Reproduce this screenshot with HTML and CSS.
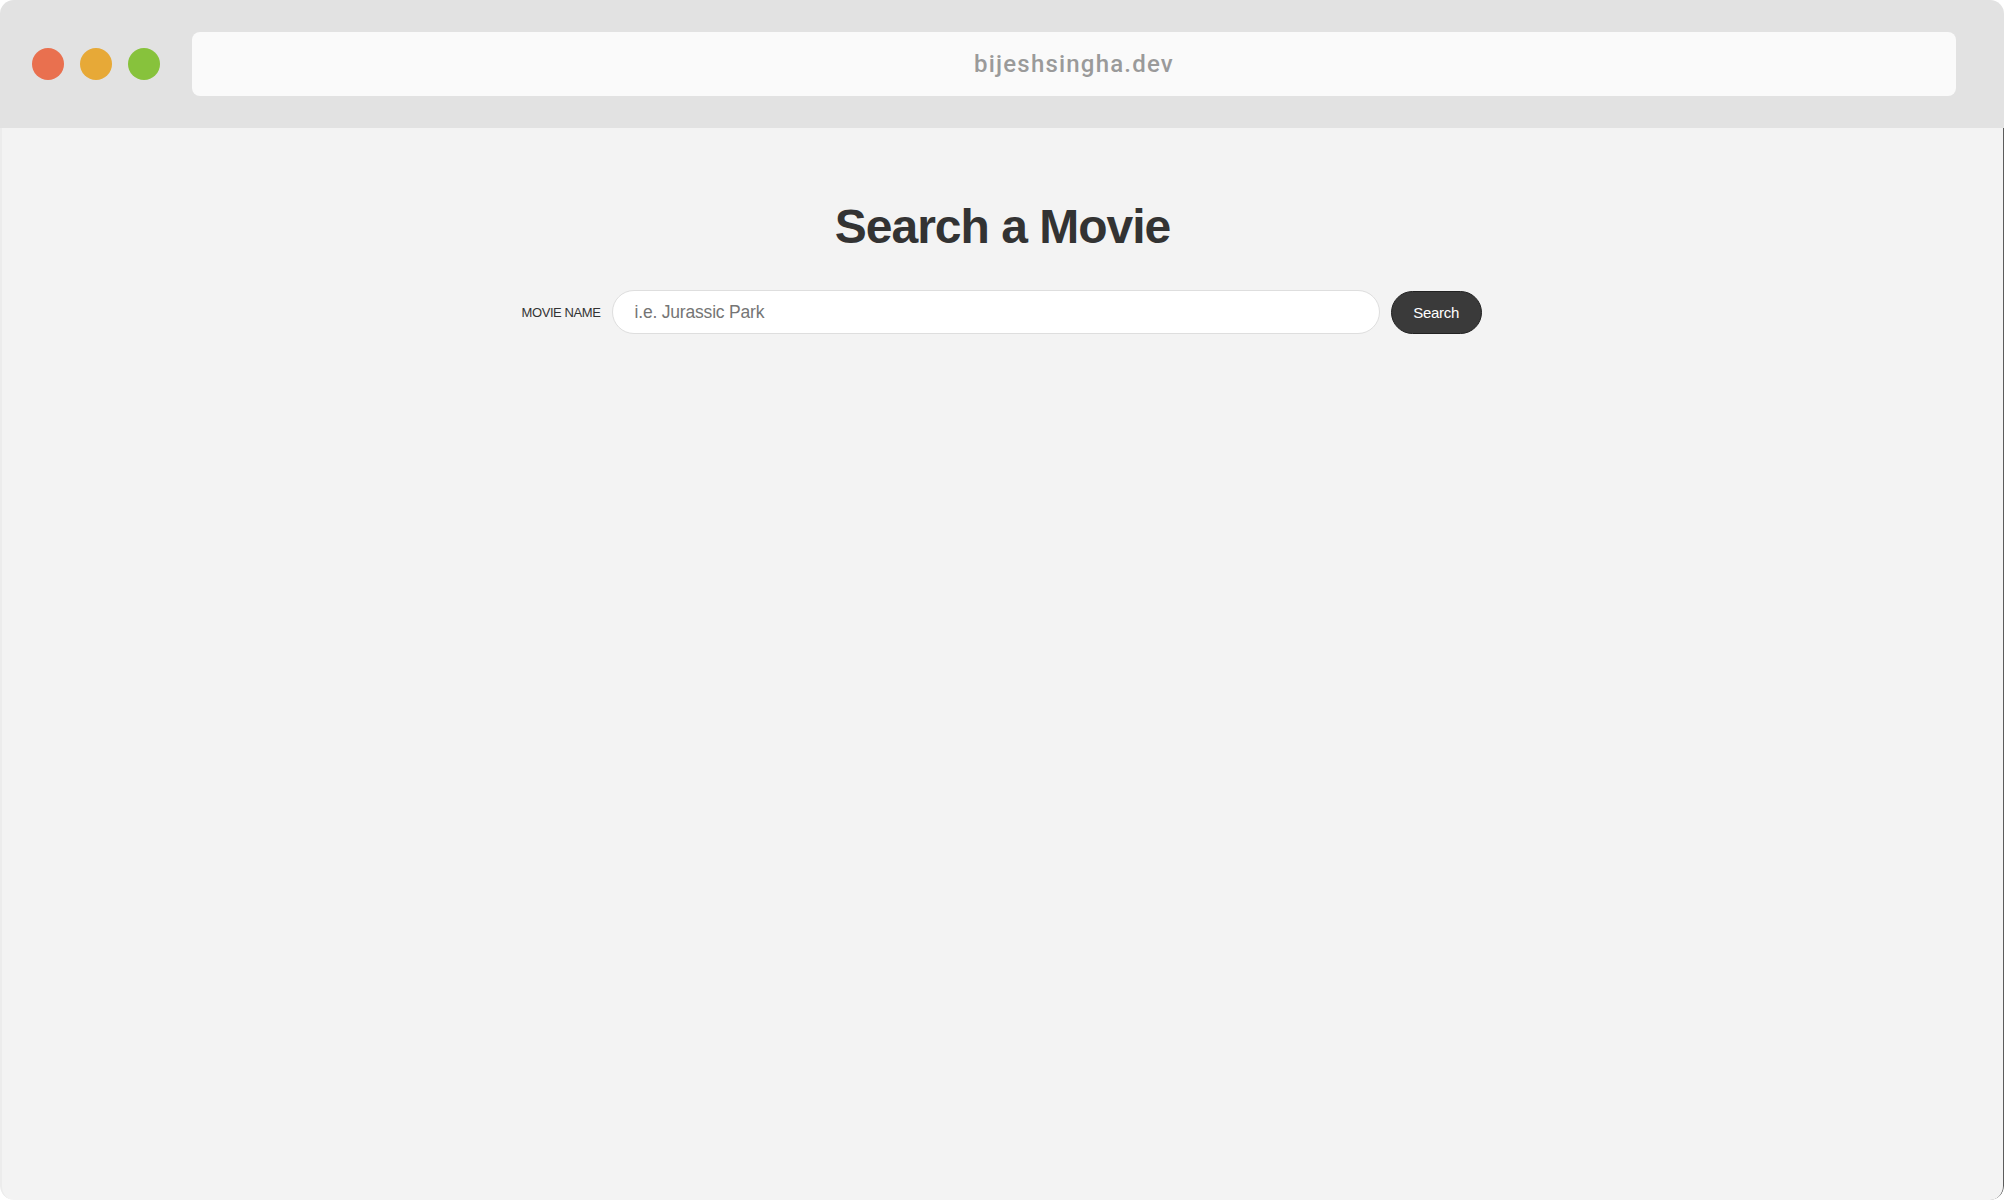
FILE: index.html
```html
<!DOCTYPE html>
<html lang="en">
<head>
<meta charset="utf-8">
<title>Search a Movie</title>
<link rel="stylesheet" href="styles.css">
</head>
<body>
<div class="window">
  <header class="titlebar">
    <div class="dots">
      <span class="dot dot-red"></span>
      <span class="dot dot-yellow"></span>
      <span class="dot dot-green"></span>
    </div>
    <div class="urlbar">bijeshsingha.dev</div>
  </header>
  <main class="content">
    <h1 class="title">Search a Movie</h1>
    <form class="search-form">
      <label class="label" for="movie">MOVIE NAME</label>
      <input class="input" id="movie" type="text" placeholder="i.e. Jurassic Park">
      <button class="button" type="button">Search</button>
    </form>
  </main>
</div>
</body>
</html>
```

FILE: styles.css
```css
* { box-sizing: border-box; }

html, body {
  margin: 0;
  padding: 0;
  background: #ffffff;
}

.window {
  width: 2004px;
  height: 1200px;
  border-radius: 14px;
  overflow: hidden;
  display: flex;
  flex-direction: column;
}

.titlebar {
  height: 128px;
  flex: none;
  background: #e2e2e2;
  display: flex;
  align-items: center;
  padding: 0 48px 0 32px;
  gap: 32px;
}

.dots {
  display: flex;
  gap: 16px;
}

.dot {
  width: 32px;
  height: 32px;
  border-radius: 50%;
  display: block;
}

.dot-red { background: #e9704f; }
.dot-yellow { background: #e7a937; }
.dot-green { background: #87c23c; }

.urlbar {
  flex: 1;
  height: 64px;
  background: #fafafa;
  border-radius: 8px;
  display: flex;
  align-items: center;
  justify-content: center;
  font-family: Roboto, "Liberation Sans", sans-serif;
  font-weight: 500;
  font-size: 24px;
  letter-spacing: 1.2px;
  color: #9a9a9a;
}

.content {
  flex: 1;
  background: #f3f3f3;
  border-right: 1px solid #5c5c5c;
  border-left: 2px solid #ececec;
  border-radius: 0 0 14px 14px;
  display: flex;
  flex-direction: column;
  align-items: center;
  font-family: "Liberation Sans", Arial, sans-serif;
  color: #333333;
}

.title {
  margin: 71px 0 0;
  font-size: 48px;
  font-weight: 700;
  letter-spacing: -1px;
  line-height: 55px;
  color: #333333;
}

.search-form {
  margin-top: 36px;
  width: 962px;
  display: flex;
  align-items: center;
  gap: 11px;
}

.label {
  font-size: 13px;
  letter-spacing: -0.4px;
  color: #333333;
  white-space: nowrap;
}

.input {
  width: 768px;
  height: 44px;
  border: 1px solid #dedede;
  border-radius: 22px;
  background: #ffffff;
  padding: 0 22px;
  font-family: "Liberation Sans", Arial, sans-serif;
  font-size: 17.5px;
  letter-spacing: -0.2px;
  color: #333333;
  outline: none;
}

.input::placeholder {
  color: #757575;
}

.button {
  width: 91px;
  height: 43px;
  border: 1px solid #222222;
  border-radius: 22px;
  background: #3a3a3a;
  color: #ffffff;
  font-family: "Liberation Sans", Arial, sans-serif;
  font-size: 15px;
  letter-spacing: -0.3px;
  padding: 0;
  cursor: pointer;
}
```
